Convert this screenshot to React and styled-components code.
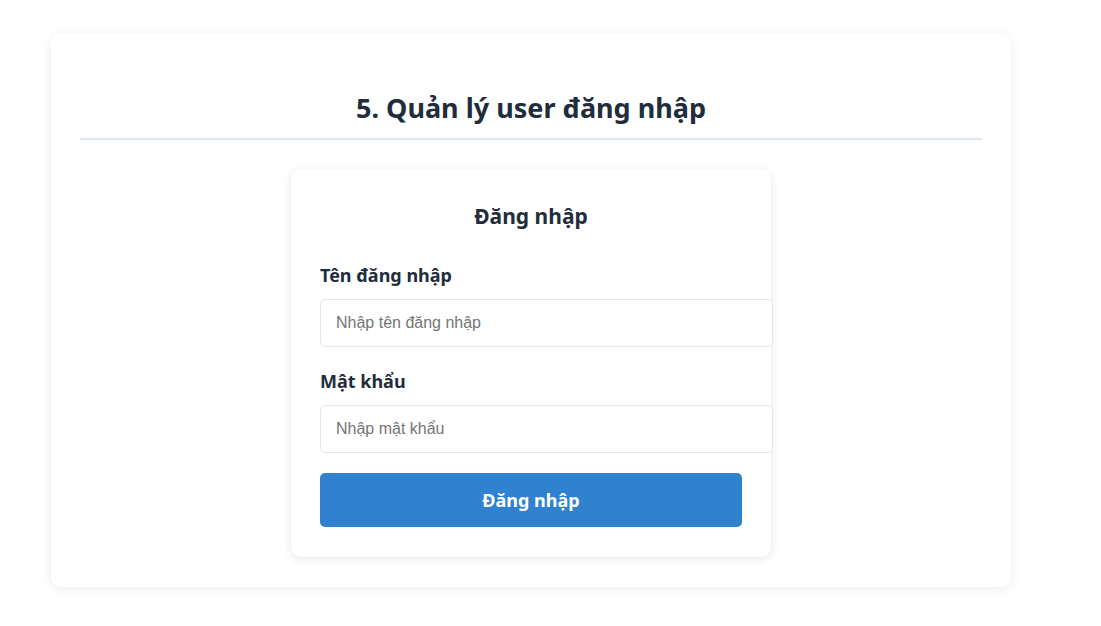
import styled, { createGlobalStyle } from "styled-components"

const GlobalStyle = createGlobalStyle`
  * { box-sizing: content-box; }
  body {
    margin: 0;
    background: #ffffff;
    font-family: "Noto Sans", "Open Sans", sans-serif;
    color: #2c3e50;
  }
`

const Page = styled.div`
  padding: 33px 0 40px 51px;
`

const Section = styled.section`
  width: 902px;
  padding: 30px 29px 30px;
  background: #fff;
  border-radius: 10px;
  box-shadow: 0 2px 12px rgba(0, 0, 0, 0.08);
`

const Title = styled.h1`
  margin: 0;
  padding: 25px 0 10px;
  font-size: 27px;
  line-height: 40px;
  font-weight: 700;
  text-align: center;
  color: #1f2d3d;
  border-bottom: 2px solid #e2e8f0;
`

const LoginCard = styled.div`
  width: 422px;
  margin: 29px auto 0;
  padding: 29px 29px 30px;
  background: #fff;
  border-radius: 10px;
  box-shadow: 0 2px 10px rgba(0, 0, 0, 0.1);
`

const CardTitle = styled.h2`
  margin: 3px 0 31px;
  font-size: 21px;
  line-height: 30px;
  font-weight: 700;
  text-align: center;
  color: #1f2d3d;
`

const FormGroup = styled.div`
  margin-bottom: ${(p) => p.$gap || 20}px;
`

const Label = styled.label`
  display: block;
  margin-bottom: 10px;
  font-size: 18px;
  line-height: 27px;
  font-weight: 700;
  color: #1f2d3d;
`

const Input = styled.input`
  display: block;
  width: 100%;
  padding: 14px 14px 14px 15px;
  font-family: "Liberation Sans", Arial, sans-serif;
  font-size: 16px;
  line-height: 18px;
  border: 1px solid #e2e8f0;
  border-radius: 5px;
  outline: none;
  &::placeholder { color: #757575; }
`

const Button = styled.button`
  display: block;
  width: 100%;
  height: 54px;
  padding: 0;
  border: none;
  border-radius: 5px;
  background: #3182ce;
  color: #fff;
  font-family: "Noto Sans", "Open Sans", sans-serif;
  font-size: 18px;
  font-weight: 700;
  cursor: pointer;
`

function App() {
  return (
    <Page>
      <GlobalStyle />
      <Section>
        <Title>5. Quản lý user đăng nhập</Title>
        <LoginCard>
          <CardTitle>Đăng nhập</CardTitle>
          <FormGroup $gap={21}>
            <Label>Tên đăng nhập</Label>
            <Input placeholder="Nhập tên đăng nhập" />
          </FormGroup>
          <FormGroup>
            <Label>Mật khẩu</Label>
            <Input type="password" placeholder="Nhập mật khẩu" />
          </FormGroup>
          <Button>Đăng nhập</Button>
        </LoginCard>
      </Section>
    </Page>
  )
}

export default App
